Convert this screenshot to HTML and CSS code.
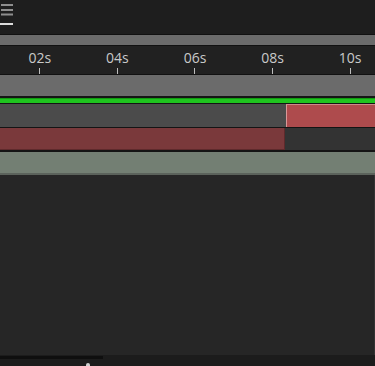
FILE: index.html
```html
<!DOCTYPE html>
<html lang="en">
<head>
  <meta charset="UTF-8" />
  <meta name="viewport" content="width=device-width, initial-scale=1.0"/>
  <title>Timeline</title>
<link rel="stylesheet" href="styles.css">
</head>
<body>
  <div class="panel">
    <div class="top">
      <svg class="menu" width="14" height="16" viewBox="0 0 14 16">
        <rect x="1" y="4" width="12" height="2" fill="#8e8e8e"/>
        <rect x="1" y="9" width="12" height="2" fill="#8e8e8e"/>
        <rect x="1" y="13.5" width="12" height="2" fill="#8e8e8e"/>
      </svg>
      <div class="tab-line"></div>
    </div>
    <div class="scroll-strip"></div>

    <div class="ruler">
      <div class="mark"><span>02s</span><i></i></div>
      <div class="mark"><span>04s</span><i></i></div>
      <div class="mark"><span>06s</span><i></i></div>
      <div class="mark"><span>08s</span><i></i></div>
      <div class="mark"><span>10s</span><i></i></div>
    </div>

    <div class="work-area"></div>
    <div class="playhead-track"></div>

    <div class="track">
      <div class="empty grey"></div>
      <div class="clip bright"></div>
    </div>
    <div class="track second">
      <div class="clip dark"></div>
      <div class="empty"></div>
    </div>
    <div class="track audio"></div>

    <div class="body"></div>

    <div class="footer">
      <div class="thumb"></div>
      <span class="caret"></span>
    </div>
  </div>
</body>
</html>
```

FILE: styles.css
```css
* {
  box-sizing: border-box;
}
body {
  margin: 0;
  padding: 0;
  background: #262626;
  font-family: "Open Sans", sans-serif;
  overflow: hidden;
}
.panel {
  width: 375px;
  height: 366px;
  display: flex;
  flex-direction: column;
}
.top {
  height: 35px;
  background: #1e1e1e;
  border-bottom: 1px solid #111;
  display: flex;
  flex-direction: column;
}
.menu {
  display: block;
}
.tab-line {
  width: 13px;
  height: 2px;
  background: #dcdcdc;
  margin-top: 7px;
}
.scroll-strip {
  height: 11px;
  background: #6b6b6b;
  border-bottom: 1px solid #111;
}
.ruler {
  height: 29px;
  background: #212121;
  border-bottom: 1px solid #111;
  display: flex;
  padding-left: 1px;
}
.mark {
  width: 77.6px;
  flex: none;
  display: flex;
  flex-direction: column;
  align-items: center;
  justify-content: space-between;
}
.mark span {
  font-size: 14px;
  line-height: 14px;
  color: #c9c9c9;
  margin-top: 5px;
}
.mark i {
  width: 1px;
  height: 6px;
  background: #bdbdbd;
}
.work-area {
  height: 23px;
  background: #6b6b6b;
  border-bottom: 2px solid #151515;
}
.playhead-track {
  height: 6px;
  background: #1fc41f;
  border-top: 1px solid #139a13;
  border-bottom: 1px solid #141414;
}
.track {
  height: 24px;
  display: flex;
  border-bottom: 1px solid #141414;
}
.track.second {
  border-bottom: 2px solid #141414;
}
.empty {
  flex: 1;
  background: #333333;
}
.empty.grey {
  flex: none;
  width: 286px;
  background: #4b4b4b;
}
.clip.bright {
  flex: 1;
  background: #ae4b4d;
  border-left: 1px solid #d89898;
  border-top: 1px solid #cc8a8a;
}
.clip.dark {
  width: 285px;
  background: #7a393b;
  border-bottom: 1px solid #5e2a2c;
  border-right: 1px solid #5e2a2c;
}
.track.audio {
  height: 23px;
  background: #737f73;
  border-bottom: 2px solid #5b625b;
}
.body {
  flex: 1;
  background: #262626;
  border-right: 1px solid #333;
}
.footer {
  height: 11px;
  background: #1c1c1c;
  position: relative;
}
.thumb {
  width: 103px;
  height: 3px;
  margin-top: 1px;
  background: #0f0f0f;
}
.caret {
  position: absolute;
  left: 86px;
  top: 8px;
  width: 4px;
  height: 3px;
  background: #d0d0d0;
  border-radius: 2px 2px 0 0;
}
```
